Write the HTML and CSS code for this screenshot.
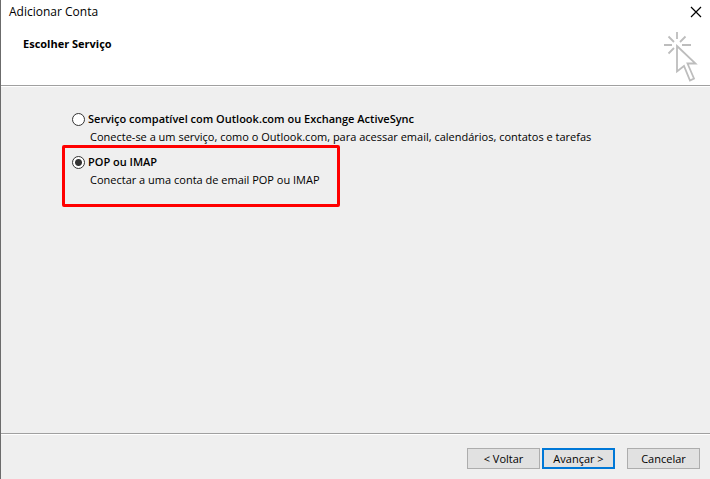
FILE: index.html
```html
<!DOCTYPE html>
<html lang="pt-BR">
<head>
    <meta charset="UTF-8">
    <title>Adicionar Conta</title>
    <link rel="stylesheet" href="styles.css">
</head>
<body>

<form class="dialog">
    <header class="header">
        <div class="titlebar">
            <span class="title">Adicionar Conta</span>
            <button class="close" type="button" aria-label="Fechar">
                <svg width="12" height="12" viewBox="0 0 12 12">
                    <path d="M1 1 L11 11 M11 1 L1 11" fill="none" stroke="#000" stroke-width="1.2"/>
                </svg>
            </button>
        </div>
        <div class="banner">
            <h1 class="heading">Escolher Serviço</h1>
            <svg class="pointer" width="34" height="51" viewBox="0 0 34 51">
                <g fill="none" stroke="#bdbdbd" stroke-width="1.8">
                    <path d="M13 1 V8 M0 14 H8 M18 14 H27 M4.500 5.500 L10 11 M21.500 5.500 L16 11 M4.500 22.500 L10 17"/>
                    <path d="M13 15 L31.500 32.500 H23.500 L30 47.500 L26 49.500 L20 35 L13 40.500 Z"/>
                </g>
            </svg>
        </div>
    </header>

    <main class="content">
        <div class="option">
            <label class="option-label" for="service-eas">
                <input class="radio" id="service-eas" name="service" type="radio" value="eas">
                Serviço compatível com Outlook.com ou Exchange ActiveSync
            </label>
            <p class="description">Conecte-se a um serviço, como o Outlook.com, para acessar email, calendários, contatos e tarefas</p>
        </div>
        <div class="option highlighted">
            <label class="option-label" for="service-pop">
                <input class="radio" id="service-pop" name="service" type="radio" value="pop" checked>
                POP ou IMAP
            </label>
            <p class="description">Conectar a uma conta de email POP ou IMAP</p>
        </div>
    </main>

    <footer class="footer">
        <button class="button" type="button">&lt; Voltar</button>
        <button class="button primary" type="submit">Avançar &gt;</button>
        <button class="button cancel" type="button">Cancelar</button>
    </footer>
</form>

</body>
</html>
```
FILE: styles.css
```css
* {
    box-sizing: border-box;
}

body {
    margin: 0;
    font-family: "Open Sans", "Noto Sans", sans-serif;
    font-size: 11px;
    color: #000;
}

.dialog {
    display: flex;
    flex-direction: column;
    min-height: 100vh;
    background: #efefef;
    border-left: 1px solid #6b6b6b;
}

.header {
    background: #fff;
    border-bottom: 1px solid #a0a0a0;
}

.titlebar {
    display: flex;
    align-items: center;
    justify-content: space-between;
    height: 23px;
    padding: 0 8px;
}

.title {
    font-size: 12px;
}

.close {
    display: flex;
    padding: 0;
    border: 0;
    background: none;
}

.banner {
    display: flex;
    align-items: flex-start;
    justify-content: space-between;
    padding: 8px 12px 3px 22px;
}

.heading {
    margin: 4px 0 0;
    font-size: 11px;
    line-height: 18px;
}

.content {
    flex: 1;
    padding: 23px 12px 24px 61px;
    border-top: 1px solid #fff;
}

.option {
    width: fit-content;
    padding: 0 17px 0 10px;
}

.option-label {
    display: flex;
    align-items: center;
    gap: 3px;
    font-weight: 600;
    line-height: 18px;
}

.description {
    margin: 1px 0 0;
    padding-left: 18px;
    line-height: 16px;
}

.highlighted {
    padding: 5px 17px 16px 7px;
    border: 3px solid #f00;
    border-radius: 2px;
}

.radio {
    appearance: none;
    width: 13px;
    height: 13px;
    margin: 0;
    border: 1px solid #333;
    border-radius: 50%;
    background: #fff;
}

.radio:checked {
    background: radial-gradient(circle, #333 3px, #fff 4px);
}

.footer {
    display: flex;
    justify-content: flex-end;
    gap: 2px;
    padding: 14px 10px 10px;
    border-top: 1px solid #a0a0a0;
    box-shadow: inset 0 1px #fff;
}

.button {
    width: 73px;
    height: 21px;
    padding: 0;
    border: 1px solid #adadad;
    background: #e1e1e1;
    color: #000;
    font: inherit;
}

.primary {
    border: 2px solid #0078d7;
}

.cancel {
    margin-left: 10px;
}
```
